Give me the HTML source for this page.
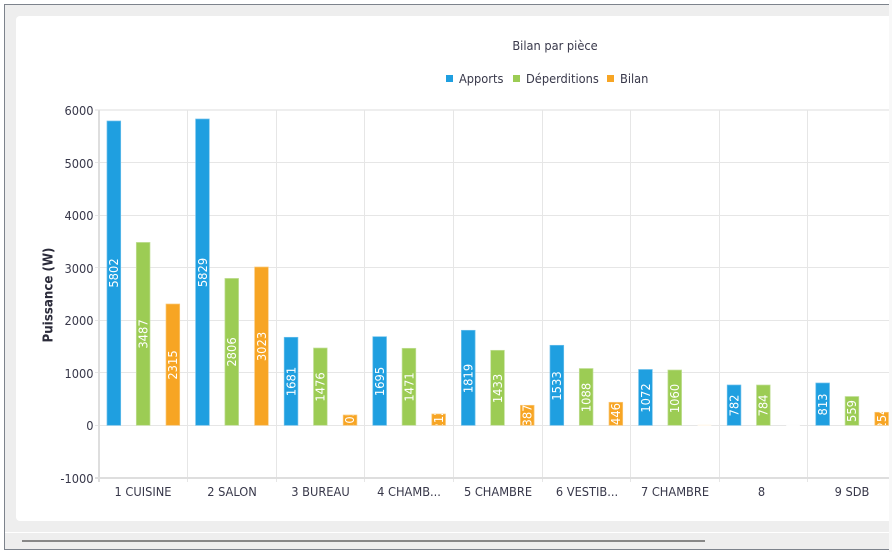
<!DOCTYPE html>
<html><head><meta charset="utf-8"><title>Bilan par pièce</title>
<style>
html,body{margin:0;padding:0;background:#fff}
svg{display:block}
text{font-family:"DejaVu Sans Condensed","DejaVu Sans","Liberation Sans",sans-serif;font-stretch:condensed;font-size:12.7px;fill:#38384a}
.b{fill:#1f9fe0;stroke:#6cc0ec;stroke-width:.7}
.g{fill:#9ccc54;stroke:#c4e09c;stroke-width:.7}
.o{fill:#f7a524;stroke:#fac878;stroke-width:.7}
.l text,text.l{fill:#fff;font-size:12.8px;text-anchor:middle}
.c{text-anchor:middle}
.y{text-anchor:end}
</style></head><body>
<svg width="892" height="552" viewBox="0 0 892 552" xmlns="http://www.w3.org/2000/svg">
<rect width="892" height="552" fill="#fff"/>
<rect x="889" y="0" width="3" height="552" fill="#f8f8f8"/>
<rect x="4" y="4" width="885" height="546" fill="#eee"/>
<rect x="4" y="4" width="885" height="1" fill="#7d838c"/>
<rect x="4" y="4" width="1" height="546" fill="#7d838c"/>
<rect x="4" y="549" width="885" height="1" fill="#7d838c"/>
<rect x="5" y="532" width="884" height="1" fill="#fff"/>
<rect x="22" y="540" width="683" height="2" fill="#888"/>
<path d="M889 16H20a4 4 0 0 0-4 4V517a4 4 0 0 0 4 4H889Z" fill="#fff"/>

<text x="555" y="50" class="c">Bilan par pièce</text>
<rect x="446" y="75" width="7" height="7" fill="#1f9fe0"/><text x="459" y="83">Apports</text>
<rect x="513" y="75" width="7" height="7" fill="#9ccc54"/><text x="526" y="83">Déperditions</text>
<rect x="607" y="75" width="7" height="7" fill="#f7a524"/><text x="620" y="83">Bilan</text>

<g fill="#e6e6e6">
<rect x="95" y="109" width="794" height="2" fill="#eee"/>
<rect x="95" y="162" width="794" height="1"/>
<rect x="95" y="215" width="794" height="1"/>
<rect x="95" y="267" width="794" height="1"/>
<rect x="95" y="320" width="794" height="1"/>
<rect x="95" y="372" width="794" height="1"/>
<rect x="95" y="425" width="794" height="1"/>
<rect x="187" y="110" width="1" height="372"/>
<rect x="276" y="110" width="1" height="372"/>
<rect x="364" y="110" width="1" height="372"/>
<rect x="453" y="110" width="1" height="372"/>
<rect x="542" y="110" width="1" height="372"/>
<rect x="630" y="110" width="1" height="372"/>
<rect x="719" y="110" width="1" height="372"/>
<rect x="807" y="110" width="1" height="372"/>
</g>
<rect x="98" y="110" width="2" height="372" fill="#dedede"/>
<rect x="95" y="477" width="794" height="2" fill="#dedede"/>

<g class="y">
<text class="y" x="93.5" y="115">6000</text>
<text class="y" x="93.5" y="168">5000</text>
<text class="y" x="93.5" y="220">4000</text>
<text class="y" x="93.5" y="273">3000</text>
<text class="y" x="93.5" y="325">2000</text>
<text class="y" x="93.5" y="378">1000</text>
<text class="y" x="93.5" y="430">0</text>
<text class="y" x="93.5" y="483">-1000</text>
</g>
<text transform="translate(52.5 295) rotate(-90)" class="c" style="font-weight:bold;font-size:13.2px;fill:#2b2b3a">Puissance (W)</text>

<rect class="b" x="107" y="121" width="13.7" height="304.3"/>
<rect class="g" x="136.3" y="242.4" width="13.7" height="182.9"/>
<rect class="o" x="166" y="304" width="13.7" height="121.3"/>
<rect class="b" x="195.6" y="119" width="13.7" height="306.3"/>
<rect class="g" x="224.9" y="278.4" width="13.7" height="146.9"/>
<rect class="o" x="254.6" y="267" width="13.7" height="158.3"/>
<rect class="b" x="284.2" y="337.3" width="13.7" height="88"/>
<rect class="g" x="313.5" y="348" width="13.7" height="77.3"/>
<rect class="o" x="343.2" y="415" width="13.7" height="10.3"/>
<rect class="b" x="372.8" y="336.7" width="13.7" height="88.6"/>
<rect class="g" x="402.1" y="348.3" width="13.7" height="77"/>
<rect class="o" x="431.8" y="414" width="13.7" height="11.3"/>
<rect class="b" x="461.4" y="330.3" width="13.7" height="95"/>
<rect class="g" x="490.7" y="350.3" width="13.7" height="75"/>
<rect class="o" x="520.4" y="405.3" width="13.7" height="20"/>
<rect class="b" x="550" y="345.3" width="13.7" height="80"/>
<rect class="g" x="579.3" y="368.5" width="13.7" height="56.8"/>
<rect class="o" x="609" y="402.3" width="13.7" height="23"/>
<rect class="b" x="638.6" y="369.5" width="13.7" height="55.8"/>
<rect class="g" x="667.9" y="370" width="13.7" height="55.3"/>
<rect x="697.6" y="424.5" width="13.7" height="1.5" fill="#fff8ee"/>
<rect class="b" x="727.2" y="385" width="13.7" height="40.3"/>
<rect class="g" x="756.5" y="385" width="13.7" height="40.3"/>
<rect x="786.2" y="424.5" width="13.7" height="1.5" fill="#fdfdfd"/>
<rect class="b" x="815.8" y="383" width="13.7" height="42.3"/>
<rect class="g" x="845.1" y="396.5" width="13.7" height="28.8"/>
<rect class="o" x="874.8" y="412.3" width="13.7" height="13"/>

<g class="l">
<text transform="translate(118.2 273) rotate(-90)">5802</text>
<text transform="translate(147.5 334) rotate(-90)">3487</text>
<text transform="translate(177.2 365) rotate(-90)">2315</text>
<text transform="translate(206.8 272.5) rotate(-90)">5829</text>
<text transform="translate(236.1 352) rotate(-90)">2806</text>
<text transform="translate(265.8 346.5) rotate(-90)">3023</text>
<text transform="translate(295.4 381.5) rotate(-90)">1681</text>
<text transform="translate(324.7 387) rotate(-90)">1476</text>
<text transform="translate(384 381.5) rotate(-90)">1695</text>
<text transform="translate(413.3 387) rotate(-90)">1471</text>
<text transform="translate(472.6 378.5) rotate(-90)">1819</text>
<text transform="translate(501.9 388.5) rotate(-90)">1433</text>
<text transform="translate(561 386) rotate(-90)">1533</text>
<text transform="translate(590.5 397.5) rotate(-90)">1088</text>
<text transform="translate(649.8 398) rotate(-90)">1072</text>
<text transform="translate(679.1 398.5) rotate(-90)">1060</text>
<svg x="727" y="385" width="14" height="40"><text transform="translate(11.4 20.5) rotate(-90)">782</text></svg>
<svg x="756" y="385" width="15" height="40"><text transform="translate(11.7 20.5) rotate(-90)">784</text></svg>
<svg x="816" y="383" width="14" height="42"><text transform="translate(11.2 21.5) rotate(-90)">813</text></svg>
<svg x="845" y="396" width="14" height="29"><text transform="translate(11.2 15) rotate(-90)">559</text></svg>
<svg x="343" y="415" width="14" height="10"><text transform="translate(11.2 5) rotate(-90)">205</text></svg>
<svg x="432" y="414" width="14" height="11"><text transform="translate(11.2 5.5) rotate(-90)">212</text></svg>
<svg x="520" y="405" width="14" height="20"><text transform="translate(11.6 10.5) rotate(-90)">387</text></svg>
<svg x="609" y="402" width="14" height="23"><text transform="translate(11.2 12) rotate(-90)">446</text></svg>
<svg x="875" y="412" width="14" height="13"><text transform="translate(11.2 6.5) rotate(-90)">254</text></svg>
</g>

<g>
<text class="c" x="143" y="496">1 CUISINE</text>
<text class="c" x="232" y="496">2 SALON</text>
<text class="c" x="320.5" y="496">3 BUREAU</text>
<text class="c" x="409" y="496">4 CHAMB...</text>
<text class="c" x="498" y="496">5 CHAMBRE</text>
<text class="c" x="587" y="496">6 VESTIB...</text>
<text class="c" x="675" y="496">7 CHAMBRE</text>
<text class="c" x="761.5" y="496">8</text>
<text class="c" x="852" y="496">9 SDB</text>
</g>
</svg>
</body></html>
